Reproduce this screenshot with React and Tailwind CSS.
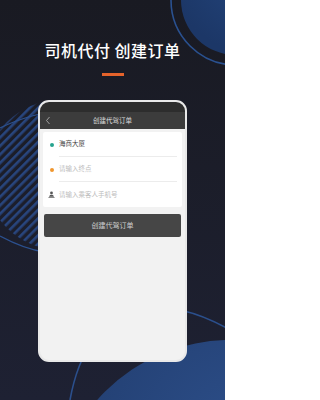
import React from "react";

function Backdrop() {
  return (
    <svg className="absolute inset-0" width="225" height="400" viewBox="0 0 225 400">
      <defs>
        <pattern id="stripes" patternUnits="userSpaceOnUse" width="6" height="6" patternTransform="rotate(45)">
          <rect x="0" y="0" width="2.6" height="6" fill="#2a4c8c" />
        </pattern>
        <radialGradient id="bigBlob" cx="0.55" cy="0.3" r="0.7">
          <stop offset="0" stopColor="#2d4f8a" />
          <stop offset="1" stopColor="#1f3a6a" />
        </radialGradient>
        <radialGradient id="topBlob" cx="0.7" cy="0.2" r="0.8">
          <stop offset="0" stopColor="#24467e" />
          <stop offset="1" stopColor="#1c3767" />
        </radialGradient>
      </defs>
      {/* top right planet */}
      <circle cx="236" cy="0" r="55" fill="url(#topBlob)" />
      <circle cx="236" cy="0" r="65" fill="none" stroke="#2a5190" strokeWidth="1.6" />
      {/* striped disc on the left */}
      <circle cx="60" cy="175" r="75" fill="url(#stripes)" opacity="0.85" />
      <path d="M0 128 C 20 118, 45 112, 60 110" fill="none" stroke="#2c5190" strokeWidth="1.2" />
      <path d="M0 236 C 15 244, 30 250, 45 252" fill="none" stroke="#2c5190" strokeWidth="1.2" />
      {/* bottom right planet */}
      <circle cx="230" cy="517" r="177" fill="url(#bigBlob)" />
      <path d="M70 400 C 88 300, 160 285, 240 336" fill="none" stroke="#2b4f8c" strokeWidth="1.6" />
    </svg>
  );
}

function UserGlyph() {
  return (
    <svg width="7" height="7" viewBox="0 0 16 16">
      <circle cx="8" cy="4.5" r="3.2" fill="#555" />
      <path d="M2.5 13 C 3 9.5, 5.5 8.5, 8 8.5 C 10.5 8.5, 13 9.5, 13.5 13 Z" fill="#555" />
      <rect x="1" y="14" width="14" height="1.6" fill="#555" />
    </svg>
  );
}

function FormRow({ icon, text, placeholder, last }) {
  return (
    <div className="flex items-center h-[25px] pl-[5px]">
      <div className="w-[7px] flex items-center justify-center">{icon}</div>
      <div
        className={
          "flex-1 h-full flex items-center ml-[4px] mr-[5px] " +
          (last ? "" : "border-b border-[#ececec]")
        }
      >
        <span className={"text-[6.5px] " + (placeholder ? "text-[#bdbdbd]" : "text-[#444]")}>{text}</span>
      </div>
    </div>
  );
}

export default function App() {
  return (
    <div
      className="relative w-[225px] h-[400px] overflow-hidden bg-gradient-to-b from-[#191a22] to-[#1e2133]"
      style={{ fontFamily: '"Noto Sans CJK SC", "Noto Sans", sans-serif' }}
    >
      <Backdrop />
      <div className="relative flex flex-col items-center pt-[40px]">
        <h1 className="text-[16px] leading-[20px] font-medium text-white tracking-[0.5px]">
          司机代付 创建订单
        </h1>
        <div className="mt-[13px] w-[22px] h-[3px] bg-[#e5632b]" />

        <div className="mt-[24px] w-[149px] h-[262px] rounded-[11px] border-[2px] border-[#e9e9e9] bg-[#f2f2f2] overflow-hidden flex flex-col">
          <div className="h-[10px] bg-[#2d2d2d]" />
          <div className="relative h-[17px] bg-[#3c3c3c] flex items-center justify-center">
            <svg className="absolute left-[5px] top-[4px]" width="6" height="9" viewBox="0 0 6 9">
              <path d="M4.5 1 L1.5 4.5 L4.5 8" fill="none" stroke="#aaa" strokeWidth="0.9" />
            </svg>
            <span className="text-[6.5px] text-[#dcdcdc]">创建代驾订单</span>
          </div>

          <div className="px-[3px] pt-[3px]">
            <div className="bg-white rounded-[2px]">
              <FormRow
                icon={<span className="block w-[4px] h-[4px] rounded-full bg-[#26a38e]" />}
                text="海商大厦"
              />
              <FormRow
                icon={<span className="block w-[4px] h-[4px] rounded-full bg-[#f0962e]" />}
                text="请输入终点"
                placeholder
              />
              <FormRow icon={<UserGlyph />} text="请输入乘客人手机号" placeholder last />
            </div>

            <div className="mt-[7px] mx-[1px] h-[23px] rounded-[2px] bg-[#464646] flex items-center justify-center">
              <span className="text-[7px] text-[#cfcfcf]">创建代驾订单</span>
            </div>
          </div>
        </div>
      </div>
    </div>
  );
}
